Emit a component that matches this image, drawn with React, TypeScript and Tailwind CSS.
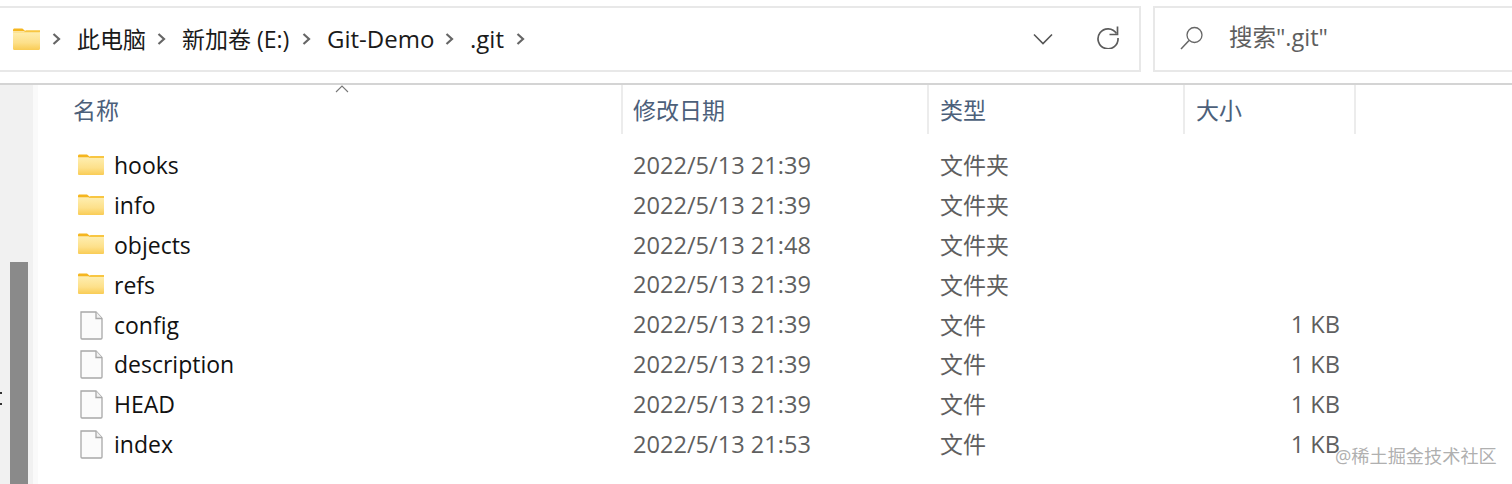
const rows = [
  { name: 'hooks', date: '2022/5/13 21:39', type: '文件夹', size: '', folder: true },
  { name: 'info', date: '2022/5/13 21:39', type: '文件夹', size: '', folder: true },
  { name: 'objects', date: '2022/5/13 21:48', type: '文件夹', size: '', folder: true },
  { name: 'refs', date: '2022/5/13 21:39', type: '文件夹', size: '', folder: true },
  { name: 'config', date: '2022/5/13 21:39', type: '文件', size: '1 KB', folder: false },
  { name: 'description', date: '2022/5/13 21:39', type: '文件', size: '1 KB', folder: false },
  { name: 'HEAD', date: '2022/5/13 21:39', type: '文件', size: '1 KB', folder: false },
  { name: 'index', date: '2022/5/13 21:53', type: '文件', size: '1 KB', folder: false },
]

const crumbs = [
  { label: '此电脑', cls: 'w-[105px] text-[23px]' },
  { label: '新加卷 (E:)', cls: 'w-[145px] text-[23px]' },
  { label: 'Git-Demo', cls: 'w-[143px] text-[24px]' },
  { label: '.git', cls: 'w-[71px] text-[24px]' },
]

function FolderIcon({ className }: { className: string }) {
  return (
    <svg viewBox="0 0 26 21" className={className}>
      <defs>
        <linearGradient id="folderBody" x1="0" y1="0" x2="0" y2="1">
          <stop offset="0" stopColor="#feeeb0" />
          <stop offset="0.6" stopColor="#fde08a" />
          <stop offset="1" stopColor="#f9cc55" />
        </linearGradient>
      </defs>
      <path d="M0 2C0 1 .6.5 1.5.5H9l3 2.5H0z" fill="#f5b61f" />
      <rect x="0" y="3.5" width="26" height="17.5" rx="1" fill="url(#folderBody)" />
      <path d="M0 3.5h10.5l2-1.5H26v2H0z" fill="#f8c642" />
    </svg>
  )
}

function FileIcon() {
  return (
    <svg viewBox="0 0 23 29" className="h-[29px] w-[23px] shrink-0">
      <path d="M1 1h15l6 6.5V27a1 1 0 0 1-1 1H2a1 1 0 0 1-1-1z" fill="#fbfbfb" stroke="#a8a8a8" strokeWidth="1.3" />
      <path d="M16 1v6.5h6" fill="#f0f0f0" stroke="#a8a8a8" strokeWidth="1.3" />
    </svg>
  )
}

function Chevron() {
  return (
    <svg viewBox="0 0 10 14" className="h-[14px] w-[10px] shrink-0">
      <path d="M2.5 2 8 7l-5.5 5" fill="none" stroke="#666" strokeWidth="2.2" />
    </svg>
  )
}

export default function App() {
  return (
    <div
      className="relative h-[484px] w-[1512px] overflow-hidden bg-white text-[#1a1a1a]"
      style={{ fontFamily: '"Open Sans", "Noto Sans CJK SC", sans-serif' }}
    >
      {/* toolbar */}
      <div className="flex h-[85px] gap-[12px] border-b-2 border-[#d4d4d4] pt-[6px]">
        <div className="flex h-[66px] w-[1141px] items-center border-2 border-l-0 border-[#e8e8e8] pr-[19px]">
          <FolderIcon className="ml-[13px] h-[22px] w-[27px] shrink-0" />
          <div className="ml-[11px] flex items-center">
            {crumbs.map((c) => (
              <div key={c.label} className={`flex items-center ${c.cls}`}>
                <Chevron />
                <span className="ml-[16px] whitespace-nowrap leading-none">{c.label}</span>
              </div>
            ))}
            <Chevron />
          </div>
          <svg viewBox="0 0 20 12" className="ml-auto h-[12px] w-[20px]">
            <path d="M1 1.5 10 10.5 19 1.5" fill="none" stroke="#555" strokeWidth="1.6" />
          </svg>
          <svg viewBox="0 0 24 24" className="ml-[43px] mb-[4px] h-[24px] w-[24px]">
            <path d="M20.5 8.5A10 10 0 1 0 22 13" fill="none" stroke="#5c5c5c" strokeWidth="1.7" />
            <path d="M21.5 1.5v8h-8" fill="none" stroke="#5c5c5c" strokeWidth="1.7" />
          </svg>
        </div>
        <div className="flex h-[66px] flex-1 items-center border-2 border-r-0 border-[#e8e8e8] pl-[25px] text-[#5e5e5e]">
          <svg viewBox="0 0 24 24" className="mb-[3px] h-[24px] w-[24px]">
            <circle cx="14.5" cy="9" r="7.5" fill="none" stroke="#666" strokeWidth="1.3" />
            <path d="M9 14.5 1 23" fill="none" stroke="#666" strokeWidth="1.5" />
          </svg>
          <span className="ml-[25px] mb-[2px] text-[23.5px] leading-none">搜索".git"</span>
        </div>
      </div>

      <div className="flex h-[399px]">
        {/* left scrollbar strip */}
        <div className="flex w-[33px] shrink-0 flex-col bg-[#f1f1f1] pl-[10px] pt-[177px]">
          <div className="h-[222px] w-[18px] bg-[#8a8a8a]" />
        </div>
        <div className="w-[5px] shrink-0 bg-[#fafafa]" />

        <div className="min-w-0 flex-1">
          {/* column header */}
          <div className="flex h-[49px] items-start text-[23px] leading-none text-[#4c607a]">
            <div className="h-full w-[583px] pl-[35px] pt-[14px]">名称</div>
            <div className="h-full w-[306px] border-l-2 border-[#ececec] pl-[10px] pt-[14px]">修改日期</div>
            <div className="h-full w-[256px] border-l-2 border-[#ececec] pl-[11px] pt-[14px]">类型</div>
            <div className="h-full w-[173px] border-x-2 border-[#ececec] pl-[11px] pt-[14px]">大小</div>
          </div>

          {/* file rows */}
          <div className="pt-[12px]">
            {rows.map((r) => (
              <div key={r.name} className="flex h-[39.8px] items-center text-[23.6px] leading-none">
                <div className="flex w-[595px] items-center pl-[39px]">
                  <div className="flex w-[37px] shrink-0 pl-[1px]">
                    {r.folder ? <FolderIcon className="mb-[3px] h-[21px] w-[26px] shrink-0" /> : <div className="pl-[2px]"><FileIcon /></div>}
                  </div>
                  <span className="text-[23px] text-[#111]">{r.name}</span>
                </div>
                <div className="w-[307px] text-[#5f5f5f]">{r.date}</div>
                <div className="w-[300px] text-[23px] text-[#5f5f5f]">{r.type}</div>
                <div className="w-[100px] text-right text-[#5f5f5f]">{r.size}</div>
              </div>
            ))}
          </div>
        </div>
      </div>

      {/* sort caret */}
      <svg viewBox="0 0 14 8" className="absolute left-[335px] top-[85px] h-[8px] w-[14px]">
        <path d="M1 7 7 1l6 6" fill="none" stroke="#777" strokeWidth="1.1" />
      </svg>
      {/* sliver of whatever sits left of the crop */}
      <div className="absolute left-0 top-[392px] h-[2px] w-[2px] bg-[#333]" />
      <div className="absolute left-0 top-[403px] h-[2px] w-[2px] bg-[#333]" />
      <span className="absolute left-[1335px] top-[447px] text-[18.2px] leading-none text-[#9a9a9a]/80">@稀土掘金技术社区</span>
    </div>
  )
}
